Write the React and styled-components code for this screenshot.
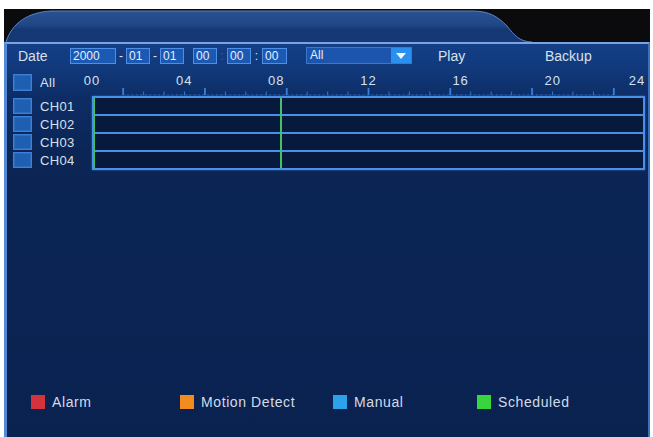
import React from 'react';
import styled, { createGlobalStyle } from 'styled-components';

const GlobalStyle = createGlobalStyle`
  html, body {
    margin: 0;
    padding: 0;
    background: #fff;
  }
  body {
    font-family: "Liberation Sans", Arial, sans-serif;
  }
`;

const Screen = styled.div`
  width: 646px;
  height: 437px;
  margin-left: 4px;
  padding-top: 9px;
  box-sizing: border-box;
  display: flex;
  flex-direction: column;
`;

const TabStrip = styled.div`
  height: 33px;
  flex: none;
  background: #0b0b0e;
  svg { display: block; }
`;

const Panel = styled.div`
  flex: 1;
  display: flex;
  flex-direction: column;
  border-top: 2px solid #79a4e0;
  border-left: 3px solid #5588d4;
  border-right: 2px solid #3d70c0;
  background: linear-gradient(180deg, #143f86 0px, #113a7d 22px, #0d2d66 52px, #0b2555 110px, #0a2250 100%);
  color: #d8e0ec;
`;

/* top toolbar */
const Toolbar = styled.div`
  display: flex;
  align-items: center;
  height: 17px;
  margin-top: 3px;
  padding-left: 11px;
  font-size: 14px;
`;

const Label = styled.span`
  width: ${p => p.w}px;
  flex: none;
  white-space: nowrap;
  margin-left: ${p => p.ml || 0}px;
`;

const Field = styled.div`
  width: ${p => p.w}px;
  height: 16px;
  flex: none;
  box-sizing: border-box;
  background: #1b5ab4;
  border: 1px solid #4f8ee4;
  color: #e6eef9;
  font-size: 12px;
  line-height: 14px;
  padding-left: 2px;
`;

const Sep = styled.span`
  width: ${p => p.w}px;
  flex: none;
  text-align: center;
  font-size: 12px;
  color: #dfe7f3;
  opacity: ${p => (p.faint ? 0.2 : 1)};
`;

const Select = styled.div`
  display: flex;
  width: 106px;
  height: 17px;
  flex: none;
  margin-left: 19px;
  box-sizing: border-box;
  background: #1c55ae;
  border: 1px solid #3a78d0;
`;

const SelectText = styled.span`
  flex: 1;
  font-size: 12px;
  line-height: 15px;
  padding-left: 3px;
  color: #e6eef9;
`;

const SelectArrow = styled.span`
  width: 20px;
  display: flex;
  align-items: center;
  justify-content: center;
  background: #2b8ff0;
  &::after {
    content: '';
    border-left: 5px solid transparent;
    border-right: 5px solid transparent;
    border-top: 6px solid #f2f7ff;
  }
`;

/* schedule area */
const Schedule = styled.div`
  display: flex;
  margin-top: 4px;
  padding-left: 6px;
`;

const ChannelCol = styled.div`
  width: 79px;
  flex: none;
  display: flex;
  flex-direction: column;
`;

const ChannelRow = styled.div`
  display: flex;
  align-items: center;
  gap: 8px;
  height: ${p => p.h}px;
  margin-bottom: 2px;
  font-size: 13px;
  letter-spacing: 0.3px;
`;

const Check = styled.span`
  width: 19px;
  height: ${p => p.h}px;
  flex: none;
  box-sizing: border-box;
  background: #1f5fb2;
  border: 1px solid #3f80d6;
  box-shadow: inset 0 0 0 1px #2a6cc0;
`;

const TimeArea = styled.div`
  width: 553px;
  flex: none;
  display: flex;
  flex-direction: column;
`;

const Ruler = styled.div`
  height: 28px;
  display: flex;
  flex-direction: column;
  justify-content: space-between;
  svg { display: block; }
`;

const Hours = styled.div`
  display: flex;
  justify-content: space-between;
  margin-top: 5px;
  font-size: 13px;
  letter-spacing: 1px;
`;

const Hour = styled.span`
  width: 0;
  display: flex;
  justify-content: center;
  white-space: nowrap;
  transform: translateX(${p => p.shift || 0}px);
`;

const Timeline = styled.div`
  position: relative;
  border: 2px solid #4a90e8;
  background: #071a3d;
  box-shadow: 0 0 2px rgba(80, 150, 240, 0.6);
`;

const Track = styled.div`
  height: 16px;
  & + & { border-top: 2px solid #4a90e8; }
`;

const Marker = styled.span`
  position: absolute;
  top: 0;
  bottom: 0;
  width: ${p => p.w}px;
  background: #45c06a;
`;

/* legend */
const Legend = styled.div`
  margin-top: auto;
  margin-bottom: 27px;
  padding-left: 24px;
  display: grid;
  grid-template-columns: 149px 153px 144px auto;
  align-items: center;
`;

const LegendItem = styled.div`
  display: flex;
  align-items: center;
  gap: 7px;
  font-size: 14px;
  letter-spacing: 0.6px;
  color: #d3dbe8;
`;

const Swatch = styled.span`
  width: 14px;
  height: 14px;
  flex: none;
  background: ${p => p.color};
`;

const channels = ['CH01', 'CH02', 'CH03', 'CH04'];
const hours = ['00', '04', '08', '12', '16', '20', '24'];
const legend = [
  { name: 'Alarm', color: '#d5333c' },
  { name: 'Motion Detect', color: '#f28c1f' },
  { name: 'Manual', color: '#2aa3ec' },
  { name: 'Scheduled', color: '#38d63e' },
];

function TabShape() {
  return (
    <svg width="646" height="33" viewBox="0 0 646 33">
      <defs>
        <linearGradient id="tabFill" x1="0" y1="0" x2="0" y2="1">
          <stop offset="0" stopColor="#2a5293" />
          <stop offset="0.45" stopColor="#1f4685" />
          <stop offset="0.6" stopColor="#153873" />
          <stop offset="1" stopColor="#163877" />
        </linearGradient>
      </defs>
      <path
        d="M2 33 C 8 14, 24 3, 48 2 L 468 2 C 486 2, 494 8, 503 17 C 510 26, 516 33, 528 33 Z"
        fill="url(#tabFill)"
      />
      <path
        d="M2 33 C 8 14, 24 3, 48 2 L 468 2 C 486 2, 494 8, 503 17 C 510 26, 516 33, 528 33"
        fill="none"
        stroke="#5a82c2"
        strokeWidth="1"
      />
    </svg>
  );
}

function RulerTicks() {
  const ticks = [];
  for (let h = 0; h <= 24; h++) {
    const x = Math.min(h * 23, 552) + 0.5;
    const major = h % 4 === 0;
    ticks.push(
      <line key={h} x1={x} x2={x} y1={major ? 0 : 4} y2={8} stroke="#3c7fd6" strokeWidth={major ? 2 : 1} />
    );
  }
  return (
    <svg width="553" height="9" viewBox="0 0 553 9">
      <line x1="0" x2="553" y1="7.5" y2="7.5" stroke="#2a5fae" strokeWidth="1" strokeDasharray="2 3" />
      {ticks}
    </svg>
  );
}

export default function App() {
  const now = 8.13;
  return (
    <>
      <GlobalStyle />
      <Screen>
        <TabStrip>
          <TabShape />
        </TabStrip>
        <Panel>
          <Toolbar>
            <Label w={52}>Date</Label>
            <Field w={46}>2000</Field>
            <Sep w={10}>-</Sep>
            <Field w={24}>01</Field>
            <Sep w={10}>-</Sep>
            <Field w={24}>01</Field>
            <Sep w={9} />
            <Field w={24}>00</Field>
            <Sep w={10} faint>:</Sep>
            <Field w={24}>00</Field>
            <Sep w={11}>:</Sep>
            <Field w={25}>00</Field>
            <Select>
              <SelectText>All</SelectText>
              <SelectArrow />
            </Select>
            <Label w={107} ml={26}>Play</Label>
            <Label w={60}>Backup</Label>
          </Toolbar>

          <Schedule>
            <ChannelCol>
              <ChannelRow h={28}>
                <Check h={17} />
                <span>All</span>
              </ChannelRow>
              {channels.map(ch => (
                <ChannelRow key={ch} h={16}>
                  <Check h={16} />
                  <span>{ch}</span>
                </ChannelRow>
              ))}
            </ChannelCol>

            <TimeArea>
              <Ruler>
                <Hours>
                  {hours.map((h, i) => (
                    <Hour key={h} shift={i === hours.length - 1 ? -8 : 0}>{h}</Hour>
                  ))}
                </Hours>
                <RulerTicks />
              </Ruler>
              <Timeline>
                {channels.map(ch => <Track key={ch} />)}
                <Marker w={1} style={{ left: 0 }} />
                <Marker w={2} style={{ left: `${(now / 24) * 549}px` }} />
              </Timeline>
            </TimeArea>
          </Schedule>

          <Legend>
            {legend.map(item => (
              <LegendItem key={item.name}>
                <Swatch color={item.color} />
                {item.name}
              </LegendItem>
            ))}
          </Legend>
        </Panel>
      </Screen>
    </>
  );
}
